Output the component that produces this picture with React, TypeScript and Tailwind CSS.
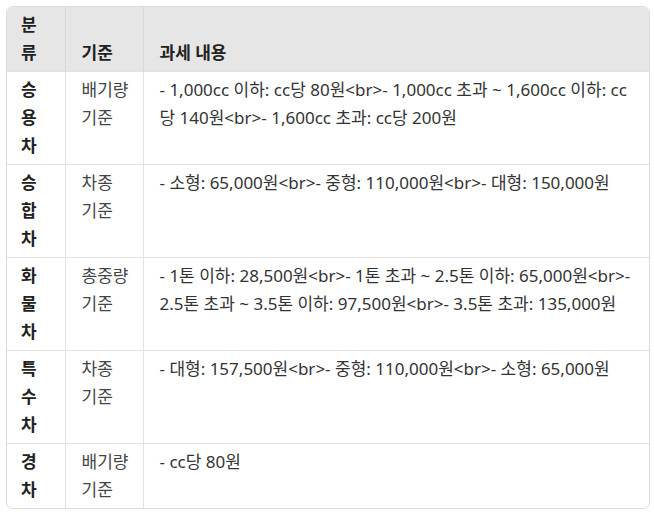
import React from "react";

const font = { fontFamily: '"Noto Sans", "Noto Sans CJK KR", sans-serif' };

type Row = { cat: string[]; basis: string[]; content: string[] };

const rows: Row[] = [
  {
    cat: ["승", "용", "차"],
    basis: ["배기량", "기준"],
    content: [
      "- 1,000cc 이하: cc당 80원<br>- 1,000cc 초과 ~ 1,600cc 이하: cc",
      "당 140원<br>- 1,600cc 초과: cc당 200원",
    ],
  },
  {
    cat: ["승", "합", "차"],
    basis: ["차종", "기준"],
    content: ["- 소형: 65,000원<br>- 중형: 110,000원<br>- 대형: 150,000원"],
  },
  {
    cat: ["화", "물", "차"],
    basis: ["총중량", "기준"],
    content: [
      "- 1톤 이하: 28,500원<br>- 1톤 초과 ~ 2.5톤 이하: 65,000원<br>-",
      "2.5톤 초과 ~ 3.5톤 이하: 97,500원<br>- 3.5톤 초과: 135,000원",
    ],
  },
  {
    cat: ["특", "수", "차"],
    basis: ["차종", "기준"],
    content: ["- 대형: 157,500원<br>- 중형: 110,000원<br>- 소형: 65,000원"],
  },
  {
    cat: ["경", "차"],
    basis: ["배기량", "기준"],
    content: ["- cc당 80원"],
  },
];

function Lines({ lines }: { lines: string[] }) {
  return (
    <>
      {lines.map((l, i) => (
        <div key={i} className="whitespace-nowrap">
          {l}
        </div>
      ))}
    </>
  );
}

export default function App() {
  return (
    <div className="w-[654px] h-[512px] bg-white pt-[6px] pl-[6px]" style={font}>
      <div className="w-[644px] border border-[#dcdcdc] rounded-[7px] overflow-hidden text-[17px] leading-[28px] text-[#333]">
        <table className="w-full border-collapse">
          <colgroup>
            <col className="w-[58px]" />
            <col className="w-[78px]" />
            <col />
          </colgroup>
          <thead>
            <tr className="bg-[#e6e6e6]">
              <th className="align-bottom text-left font-bold text-[#222] pl-[14px] py-1 border-r border-[#d8d8d8]">
                <div>분</div>
                <div>류</div>
              </th>
              <th className="align-bottom text-left font-bold text-[#222] pl-[16px] py-1 border-r border-[#d8d8d8]">
                기준
              </th>
              <th className="align-bottom text-left font-bold text-[#222] pl-[16px] py-1">
                과세 내용
              </th>
            </tr>
          </thead>
          <tbody>
            {rows.map((r, i) => (
              <tr key={i} className="border-t border-[#e2e2e2]">
                <td className="align-top pl-[14px] py-1 font-bold text-[#222] border-r border-[#e2e2e2]">
                  <Lines lines={r.cat} />
                </td>
                <td className="align-top pl-[16px] py-1 text-[#444] border-r border-[#e2e2e2]">
                  <Lines lines={r.basis} />
                </td>
                <td className="align-top pl-[16px] py-1 text-[#333]">
                  <Lines lines={r.content} />
                </td>
              </tr>
            ))}
          </tbody>
        </table>
      </div>
    </div>
  );
}
